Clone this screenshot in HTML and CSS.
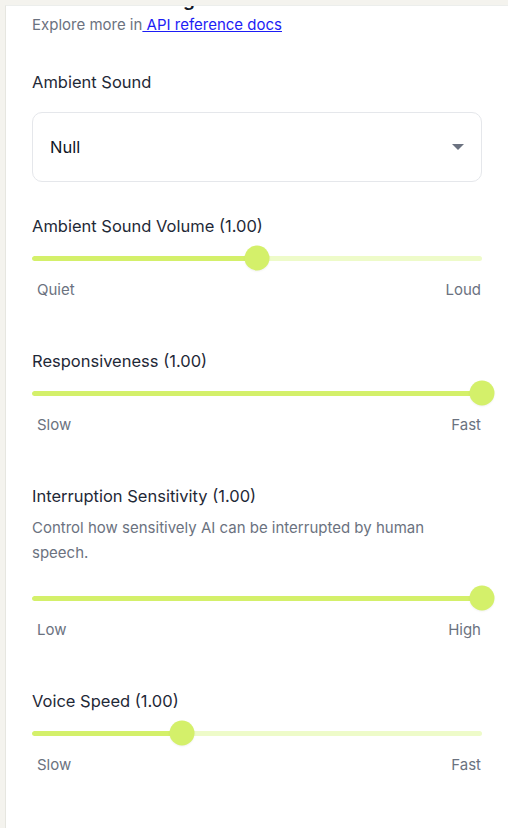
FILE: index.html
```html
<!DOCTYPE html>
<html>
<head>
<meta charset="utf-8">
<link rel="stylesheet" href="styles.css">
</head>
<body>
<div class="panel">
  <div class="content">
    <h2 class="heading">Advanced Settings</h2>
    <p class="explore">Explore more in<a href="#" class="link"> API reference docs</a></p>

    <section class="field field-select">
      <div class="label">Ambient Sound</div>
      <div class="select">
        <span>Null</span>
        <svg class="caret" width="12" height="6" viewBox="0 0 12 6"><path d="M0 0h12L6 6z" fill="#6b7280"/></svg>
      </div>
    </section>

    <section class="field">
      <div class="label">Ambient Sound Volume (1.00)</div>
      <div class="slider">
        <div class="track"><div class="fill" style="width:50%"></div></div>
        <div class="thumb" style="left:50%"></div>
      </div>
      <div class="ends"><span>Quiet</span><span>Loud</span></div>
    </section>

    <section class="field">
      <div class="label">Responsiveness (1.00)</div>
      <div class="slider">
        <div class="track"><div class="fill" style="width:100%"></div></div>
        <div class="thumb" style="left:100%"></div>
      </div>
      <div class="ends"><span>Slow</span><span>Fast</span></div>
    </section>

    <section class="field">
      <div class="label">Interruption Sensitivity (1.00)</div>
      <p class="desc">Control how sensitively AI can be interrupted by human speech.</p>
      <div class="slider">
        <div class="track"><div class="fill" style="width:100%"></div></div>
        <div class="thumb" style="left:100%"></div>
      </div>
      <div class="ends"><span>Low</span><span>High</span></div>
    </section>

    <section class="field">
      <div class="label">Voice Speed (1.00)</div>
      <div class="slider">
        <div class="track"><div class="fill" style="width:33.3%"></div></div>
        <div class="thumb" style="left:33.3%"></div>
      </div>
      <div class="ends"><span>Slow</span><span>Fast</span></div>
    </section>

    <section class="field">
      <div class="label">Voice Temperature (1.00)</div>
      <div class="slider">
        <div class="track"><div class="fill" style="width:50%"></div></div>
        <div class="thumb" style="left:50%"></div>
      </div>
    </section>
  </div>
</div>
</body>
</html>
```
FILE: styles.css
```css
html, body {
  margin: 0;
  padding: 0;
  height: 100%;
  overflow: hidden;
}
body {
  background: #f4f3ee;
  font-family: Inter, "Noto Sans", sans-serif;
  color: #1f2937;
  padding: 5px 0 0 5px;
  box-sizing: border-box;
}
.panel {
  background: #ffffff;
  border-top: 1px solid #eceeec;
  border-left: 1px solid #e6e6e0;
  height: 100%;
  overflow: hidden;
}
.content {
  padding: 0 26px 0 26px;
  margin-top: -18px;
}
.heading {
  margin: 0;
  font-size: 19px;
  line-height: 24px;
  font-weight: 600;
  color: #111827;
}
.explore {
  margin: 3px 0 0 0;
  font-size: 15px;
  line-height: 20px;
  color: #6b7280;
}
.link {
  color: #1d1df5;
  text-decoration: underline;
}
.field {
  margin-top: 49px;
}
.field-select {
  margin-top: 35px;
}
.field-select + .field {
  margin-top: 32px;
}
.label {
  font-size: 16.5px;
  line-height: 24px;
}
.select {
  margin-top: 18px;
  height: 70px;
  box-sizing: border-box;
  border: 1px solid #e5e7eb;
  border-radius: 10px;
  display: flex;
  align-items: center;
  justify-content: space-between;
  padding: 0 17px 0 17px;
  font-size: 16.5px;
  color: #111827;
}
.caret {
  display: block;
}
.desc {
  margin: 7px 0 13px 0;
  font-size: 15px;
  line-height: 25px;
  color: #6b7280;
}
.slider {
  position: relative;
  height: 40px;
  display: flex;
  align-items: center;
}
.track {
  flex: 1;
  height: 5px;
  border-radius: 3px;
  background: #eefbc9;
  overflow: hidden;
}
.fill {
  height: 100%;
  background: #d4f06a;
  border-radius: 3px;
}
.thumb {
  position: absolute;
  top: 50%;
  width: 25px;
  height: 25px;
  border-radius: 50%;
  background: #d4f06a;
  transform: translate(-50%, -50%);
  box-shadow: 0 1px 2px rgba(0, 0, 0, 0.06);
}
.ends {
  margin-top: 2px;
  display: flex;
  justify-content: space-between;
  font-size: 15px;
  line-height: 20px;
  color: #6b7280;
  padding: 0 1px 0 5px;
}
```
